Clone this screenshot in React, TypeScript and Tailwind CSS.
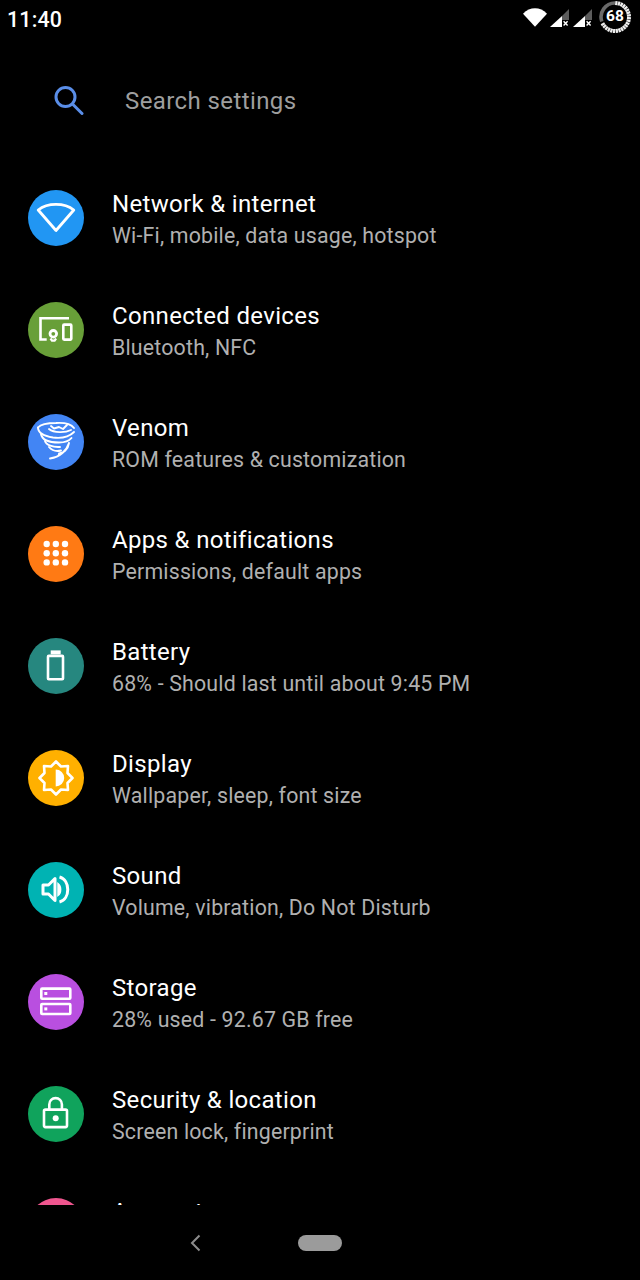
import React from "react";

const W = "#ffffff";

const Wifi = () => (
  <path d="M28 40.5 L10.2 20 C19.5 12.5 36.5 12.5 45.8 20 Z" fill="none" stroke={W} strokeWidth="2.8" strokeLinejoin="round" />
);
const Devices = () => (
  <g fill="none" stroke={W} strokeWidth="2.6">
    <path d="M41 16.3 H12.5 V37.5 H18.7" />
    <rect x="35.3" y="22.6" width="8" height="15" rx="0.8" />
    <circle cx="25.3" cy="31.8" r="3.3" strokeWidth="2.8" />
    <path d="M22.5 36.5 L24 38.6 H26.6 L28.1 36.5" strokeWidth="2.2" />
  </g>
);
const Venom = () => (
  <g fill="none" stroke={W} strokeWidth="1.9" strokeLinecap="round" strokeLinejoin="round">
    <path d="M10 13.5 C13 10 21 9 28 9 C36 8.5 43 10 46 14" />
    <path d="M23 12 L26 14.5 L31 13 L35 15 L39 11" />
    <path d="M21 15 C26 19 37 19 43 16" />
    <path d="M10 13.5 C10 19 16 22 25 23.5 C33 24.5 41 23 46 18" />
    <path d="M13 20 C14 26 22 28.5 31 28.5 C36 28.5 41 27 43.5 24" />
    <path d="M17 27 C18 31 25 33.5 32 33" />
    <path d="M21 33 C24 36.5 29 37.5 33 36.5" />
    <path d="M22 44.5 C31 43 38 38 41 29 C40 36 35 39 31 39.5 C32 42 27 44 22 44.5 Z" fill={W} />
  </g>
);
const Apps = () => (
  <g fill={W}>
    {[18, 27.3, 36.4].flatMap((y) =>
      [18.7, 27.8, 37].map((x) => <circle key={`${x}-${y}`} cx={x} cy={y} r="3.2" />)
    )}
  </g>
);
const Battery = () => (
  <g fill="none" stroke={W} strokeWidth="2.6">
    <rect x="20" y="17.9" width="15" height="23.3" rx="0.8" />
    <path d="M22.7 14.4 H32.7" strokeWidth="4" />
  </g>
);
const Display = () => (
  <g>
    <path
      d="M28 11.5 L33 16.5 L40 16 L39.5 23 L44.5 28 L39.5 33 L40 40 L33 39.5 L28 44.5 L23 39.5 L16 40 L16.5 33 L11.5 28 L16.5 23 L16 16 L23 16.5 Z"
      fill="none"
      stroke={W}
      strokeWidth="2.6"
      strokeLinejoin="round"
    />
    <path d="M27.7 19.5 A8.5 8.5 0 0 1 27.7 36.5 Z" fill={W} />
  </g>
);
const Sound = () => (
  <g fill="none" stroke={W}>
    <path d="M15 23 H20.5 L27 16.5 V38.5 L20.5 32 H15 Z" strokeWidth="3" strokeLinejoin="round" fill="none" />
    <path d="M30 21.5 C33.5 24 33.5 31 30 33.5 Z" fill={W} strokeWidth="1.5" />
    <path d="M31.5 15 C42.5 18 42.5 37 31.5 40" strokeWidth="3" />
  </g>
);
const Storage = () => (
  <g>
    <g fill="none" stroke={W} strokeWidth="2.6">
      <rect x="13.3" y="14.6" width="29" height="10.2" rx="0.8" />
      <rect x="13.3" y="30" width="29" height="10" rx="0.8" />
    </g>
    <rect x="16.3" y="18" width="3" height="3" fill={W} />
    <rect x="16.3" y="33.4" width="3" height="3" fill={W} />
  </g>
);
const Lock = () => (
  <g>
    <rect x="16" y="23.6" width="23" height="17.5" rx="1.5" fill="none" stroke={W} strokeWidth="2.6" />
    <path d="M21.3 23.6 V18.4 A6.3 6.3 0 0 1 33.9 18.4 V23.6" fill="none" stroke={W} strokeWidth="2.6" />
    <circle cx="27.7" cy="32.3" r="3" fill={W} />
  </g>
);

const rows: { title: string; sub: string; bg: string; icon: React.ReactNode }[] = [
  { title: "Network & internet", sub: "Wi-Fi, mobile, data usage, hotspot", bg: "bg-[#2196f3]", icon: <Wifi /> },
  { title: "Connected devices", sub: "Bluetooth, NFC", bg: "bg-[#689f38]", icon: <Devices /> },
  { title: "Venom", sub: "ROM features & customization", bg: "bg-[#4285f4]", icon: <Venom /> },
  { title: "Apps & notifications", sub: "Permissions, default apps", bg: "bg-[#ff7a14]", icon: <Apps /> },
  { title: "Battery", sub: "68% - Should last until about 9:45 PM", bg: "bg-[#26877f]", icon: <Battery /> },
  { title: "Display", sub: "Wallpaper, sleep, font size", bg: "bg-[#ffb000]", icon: <Display /> },
  { title: "Sound", sub: "Volume, vibration, Do Not Disturb", bg: "bg-[#00b3b3]", icon: <Sound /> },
  { title: "Storage", sub: "28% used - 92.67 GB free", bg: "bg-[#b94fe0]", icon: <Storage /> },
  { title: "Security & location", sub: "Screen lock, fingerprint", bg: "bg-[#10a35c]", icon: <Lock /> },
  { title: "Accounts", sub: "", bg: "bg-[#f0568f]", icon: null },
];

function Signal() {
  return (
    <svg width="19" height="18" viewBox="0 0 19 18" className="shrink-0">
      <path d="M0 18 L12 7 V18 Z" fill="#fff" />
      <path d="M12 7 L19 0 V11 H12 Z" fill="#5c5c5c" />
      <path d="M13.6 12.3 L17.6 16.6 M17.6 12.3 L13.6 16.6" stroke="#fff" strokeWidth="1.4" />
    </svg>
  );
}

function BatteryRing() {
  const ticks = Array.from({ length: 22 }, (_, i) => i);
  return (
    <div className="relative w-[34px] h-[34px] shrink-0">
      <svg width="34" height="34" viewBox="0 0 34 34" className="absolute inset-0">
        <path d="M3.8 21.5 A14 14 0 0 1 17 3" fill="none" stroke="#6a6a6a" strokeWidth="3.6" />
        {ticks.map((i) => {
          const a = ((i + 0.5) / 22) * 2 * Math.PI * 0.68;
          const s = Math.sin(a);
          const c = -Math.cos(a);
          return (
            <line
              key={i}
              x1={17 + 12 * s}
              y1={17 + 12 * c}
              x2={17 + 16 * s}
              y2={17 + 16 * c}
              stroke="#eeeeee"
              strokeWidth="2.3"
            />
          );
        })}
      </svg>
      <span className="absolute inset-0 flex items-center justify-center text-[15.5px] font-bold text-white leading-none">
        68
      </span>
    </div>
  );
}

export default function App() {
  return (
    <div className="w-[640px] h-[1280px] bg-black flex flex-col overflow-hidden font-['Roboto',sans-serif]">
      <div className="h-[40px] shrink-0 flex items-start justify-between pl-[7px] pr-[8px]">
        <span className="self-center text-white text-[21.33px] leading-none font-medium tracking-[0.2px]">11:40</span>
        <div className="flex items-center h-[34px]">
          <svg width="24" height="19" viewBox="0 0 24 19" className="mr-[3px] mt-[1px]">
            <path d="M12 18.7 L0 5.7 C7 -1.5 17 -1.5 24 5.7 Z" fill="#fff" />
          </svg>
          <div className="flex items-center gap-[4px] mt-[2px]">
            <Signal />
            <Signal />
          </div>
          <div className="w-[6px]" />
          <BatteryRing />
        </div>
      </div>

      <div className="h-[122px] shrink-0 flex pl-[52px] pt-[43px]">
        <svg width="32" height="34" viewBox="0 0 32 34" className="mt-[1px]" fill="none" stroke="#5a8ee8" strokeWidth="3">
          <circle cx="13.5" cy="13" r="9.5" />
          <path d="M20.5 20 L30 29.5" strokeLinecap="round" />
        </svg>
        <span className="ml-[41px] mt-[1px] text-[24px] leading-[34px] tracking-[0.4px] text-[#9e9e9e]">Search settings</span>
      </div>

      <div className="h-[1043px] shrink-0 overflow-hidden">
        {rows.map((r) => (
          <div key={r.title} className="h-[112px] flex items-center pl-[28px]">
            <div className={`w-[56px] h-[56px] rounded-full shrink-0 ${r.bg}`}>
              <svg width="56" height="56" viewBox="0 0 56 56">
                {r.icon}
              </svg>
            </div>
            <div className="ml-[28px] pt-[4px]">
              <div className="text-[24px] leading-[32px] tracking-[0.33px] text-white">{r.title}</div>
              <div className="h-[32px] text-[21.33px] leading-[32px] tracking-[0.19px] text-[#b0b0b0]">{r.sub}</div>
            </div>
          </div>
        ))}
      </div>

      <div className="flex-1 flex items-center">
        <svg width="12" height="18" viewBox="0 0 12 18" className="ml-[190px]" fill="none" stroke="#8c8c8c" strokeWidth="2">
          <path d="M9.5 1.5 L2 9 L9.5 16.5" />
        </svg>
        <div className="ml-[96px] w-[44px] h-[16px] rounded-full bg-[#9b9b9b]" />
      </div>
    </div>
  );
}
